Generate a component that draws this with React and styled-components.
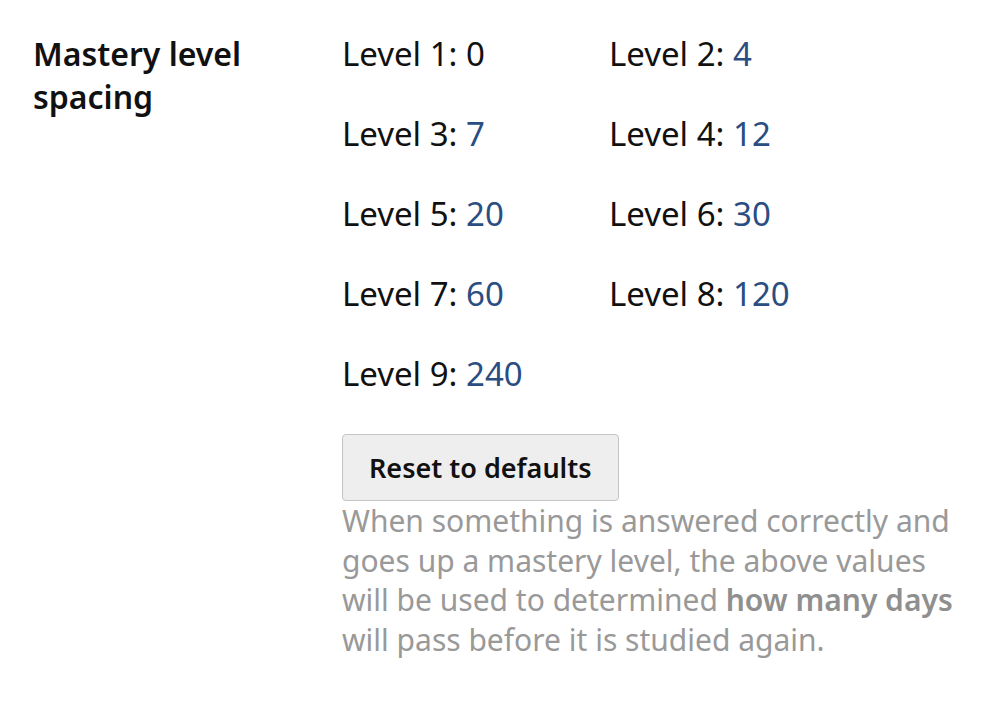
import React from "react";
import styled, { createGlobalStyle } from "styled-components";

const Global = createGlobalStyle`
  html, body { margin: 0; padding: 0; background: #fff; }
  body { font-family: "Noto Sans", "Open Sans", sans-serif; color: #111; }
`;

const Section = styled.div`
  display: grid;
  grid-template-columns: 309px 1fr;
  padding: 32px 0 0 33px;
`;

const Label = styled.h2`
  margin: 0;
  font-size: 32px;
  line-height: 43px;
  font-weight: 600;
  color: #111;
`;

const Body = styled.div`
  display: flex;
  flex-direction: column;
  align-items: flex-start;
`;

const LevelGrid = styled.div`
  display: grid;
  grid-template-columns: 267px 267px;
  row-gap: 36px;
`;

const Level = styled.div`
  font-size: 33px;
  line-height: 44px;
  color: #111;
  white-space: nowrap;
`;

const Value = styled.span`
  color: ${(p) => (p.$fixed ? "#111" : "#2a4d82")};
`;

const Button = styled.button`
  margin-top: 38px;
  height: 67px;
  padding: 0 26px;
  font-family: inherit;
  font-size: 27px;
  font-weight: 600;
  color: #111;
  background: #eeeeee;
  border: 1px solid #c4c4c4;
  border-radius: 4px;
`;

const Help = styled.p`
  margin: 0;
  width: 618px;
  font-size: 30px;
  line-height: 39.5px;
  color: #999;
  b { font-weight: 600; color: #8f8f8f; }
`;

const levels = [0, 4, 7, 12, 20, 30, 60, 120, 240];

export default function App() {
  return (
    <>
      <Global />
      <Section>
        <Label>
          Mastery level
          <br />
          spacing
        </Label>
        <Body>
          <LevelGrid>
            {levels.map((v, i) => (
              <Level key={i}>
                Level {i + 1}: <Value $fixed={i === 0}>{v}</Value>
              </Level>
            ))}
          </LevelGrid>
          <Button>Reset to defaults</Button>
          <Help>
            When something is answered correctly and goes up a mastery level,
            the above values will be used to determined <b>how many days</b>{" "}
            will pass before it is studied again.
          </Help>
        </Body>
      </Section>
    </>
  );
}
